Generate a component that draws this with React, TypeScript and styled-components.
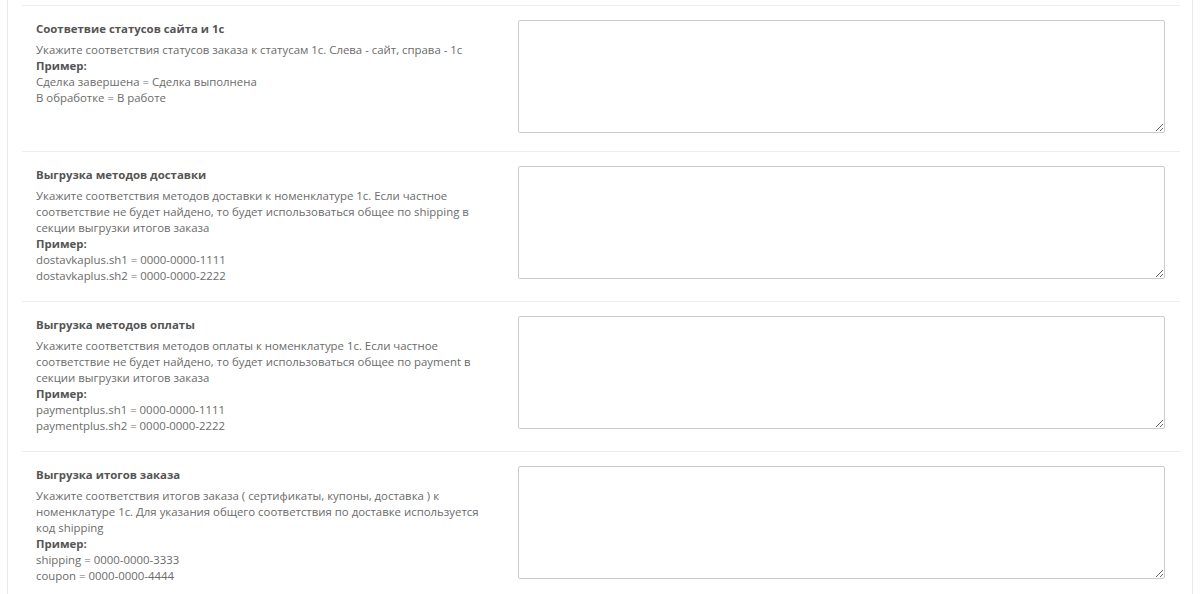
import styled, { createGlobalStyle } from "styled-components";

const GlobalStyle = createGlobalStyle`
    html, body {
        margin: 0;
        padding: 0;
        background: #fff;
    }
    body {
        font-family: "Open Sans", "Noto Sans", sans-serif;
        font-size: 11.4px;
        color: #6b6b6b;
    }
`;

type Field = {
    title: string;
    lines: string[];
    examples: string[];
};

const fields: Field[] = [
    {
        title: "Соответвие статусов сайта и 1с",
        lines: ["Укажите соответствия статусов заказа к статусам 1с. Слева - сайт, справа - 1с"],
        examples: ["Сделка завершена = Сделка выполнена", "В обработке = В работе"],
    },
    {
        title: "Выгрузка методов доставки",
        lines: [
            "Укажите соответствия методов доставки к номенклатуре 1с. Если частное",
            "соответствие не будет найдено, то будет использоваться общее по shipping в",
            "секции выгрузки итогов заказа",
        ],
        examples: ["dostavkaplus.sh1 = 0000-0000-1111", "dostavkaplus.sh2 = 0000-0000-2222"],
    },
    {
        title: "Выгрузка методов оплаты",
        lines: [
            "Укажите соответствия методов оплаты к номенклатуре 1с. Если частное",
            "соответствие не будет найдено, то будет использоваться общее по payment в",
            "секции выгрузки итогов заказа",
        ],
        examples: ["paymentplus.sh1 = 0000-0000-1111", "paymentplus.sh2 = 0000-0000-2222"],
    },
    {
        title: "Выгрузка итогов заказа",
        lines: [
            "Укажите соответствия итогов заказа ( сертификаты, купоны, доставка ) к",
            "номенклатуре 1с. Для указания общего соответствия по доставке используется",
            "код shipping",
        ],
        examples: ["shipping = 0000-0000-3333", "coupon = 0000-0000-4444"],
    },
];

export default function App() {
    return (
        <>
            <GlobalStyle />
            <Page>
                <Panel>
                    {fields.map((field) => (
                        <FormGroup key={field.title}>
                            <LabelCol>
                                <Title>{field.title}</Title>
                                <Help>
                                    {field.lines.map((line) => (
                                        <Line key={line}>{line}</Line>
                                    ))}
                                    <Line>
                                        <b>Пример:</b>
                                    </Line>
                                    {field.examples.map((line) => (
                                        <Line key={line}>{line}</Line>
                                    ))}
                                </Help>
                            </LabelCol>
                            <InputCol>
                                <TextArea />
                            </InputCol>
                        </FormGroup>
                    ))}
                </Panel>
            </Page>
        </>
    );
}

const Page = styled.div`
    padding: 0 7px;
    height: 594px;
    overflow: hidden;
`;

const Panel = styled.div`
    border: 1px solid #e9e9e9;
    border-top: none;
    padding: 5px 12px 0 14px;
    min-height: 700px;
`;

const FormGroup = styled.div`
    display: grid;
    grid-template-columns: 482px 1fr;
    border-top: 1px solid #ededed;
    padding: 14px 0 18px;
`;

const LabelCol = styled.div`
    padding: 1px 15px 0 14px;
    margin-bottom: -1px;
`;

const Title = styled.div`
    font-weight: bold;
    color: #555;
    line-height: 16px;
    margin-bottom: 5px;
`;

const Help = styled.div`
    line-height: 16px;

    b {
        color: #555;
    }
`;

const Line = styled.div`
    white-space: nowrap;
`;

const InputCol = styled.div`
    padding: 0 15px 0 14px;
`;

const TextArea = styled.textarea`
    display: block;
    box-sizing: border-box;
    width: 100%;
    height: 113px;
    margin: 0;
    border: 1px solid #ccc;
    border-radius: 2px;
    background: #fff;
    font-family: inherit;
    font-size: 12px;
    resize: vertical;
`;
